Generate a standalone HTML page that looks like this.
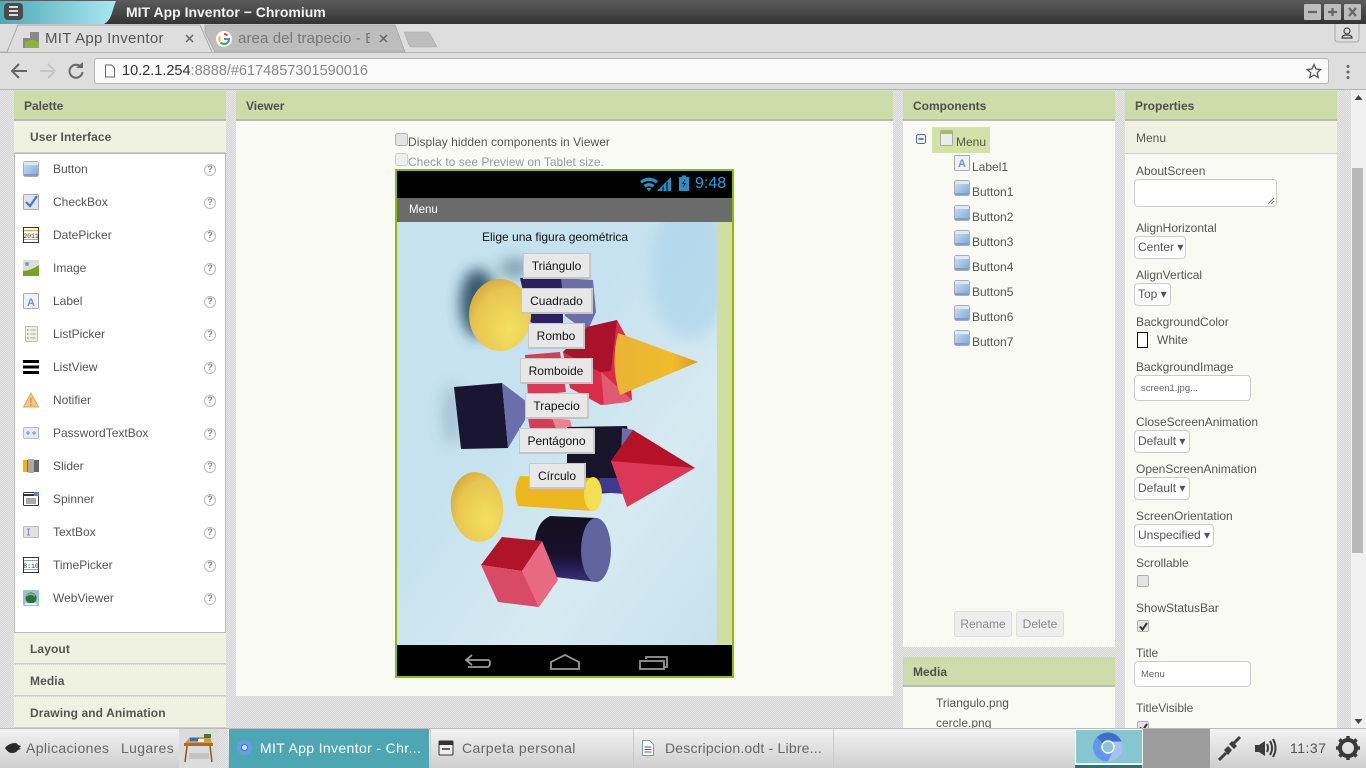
<!DOCTYPE html>
<html><head><meta charset="utf-8"><title>MIT App Inventor</title>
<style>
html,body{margin:0;padding:0;width:1366px;height:768px;overflow:hidden;background:#e4e4e4;font-family:"Liberation Sans",sans-serif;color:#555}
div,span,svg{position:absolute;box-sizing:border-box}
.t{white-space:nowrap;line-height:16px;font-size:12px;color:#555}
.dots{background-color:#e6e6e6;background-image:conic-gradient(#d6d6d6 25%,transparent 0 50%,#d6d6d6 0 75%,transparent 0);background-size:2px 2px}
.hd{background:#cddca9;border-bottom:2px solid #b9bdae;height:30px;top:91px}
.hd b{position:absolute;left:10px;top:7px;font-size:12px;line-height:16px;color:#4f4f4f}
.sub{background:#eff2e0;left:14px;width:212px;border-bottom:1px solid #ccc}
.sub b{position:absolute;left:16px;top:8px;font-size:12px;line-height:16px;color:#555;letter-spacing:.1px}
.body{background:#f9faf4}
.ic{left:23px;width:16px;height:16px}
.q{left:204px;width:12px;height:12px;border:1.5px solid #bbb;border-radius:50%;font:bold 9px/9px "Liberation Sans",sans-serif;color:#888;text-align:center;background:#fff}
.sel{left:1134px;height:23px;background:#fff;border:1px solid #ccc;border-radius:4px;font-size:12px;line-height:21px;padding-left:3px;color:#555;white-space:nowrap}
.inp{left:1134px;background:#fff;border:1px solid #ccc;border-radius:4px}
.cb{left:1137px;width:12px;height:12px;background:#e4e4e4;border:1px solid #b0b0b0;border-radius:2px}
.pb{background:#e8e8e8;border:1px solid #c8c8c8;border-bottom:2px solid #c4c4c4;border-right:2px solid #c8c8c8;font-size:12px;line-height:25px;color:#111;text-align:center;white-space:nowrap}
.btn{top:611px;height:26px;background:#eee;border:1px solid #ddd;border-radius:3px;font-size:12px;line-height:24px;text-align:center;color:#888}
.task{top:728px;height:40px;font-size:14px;line-height:40px;white-space:nowrap;color:#666}
</style></head><body>
<svg width="0" height="0" style="position:absolute"><defs>
<linearGradient id="bg" x1="0" y1="0" x2="1" y2="1"><stop offset="0" stop-color="#cfe4f1"/><stop offset="1" stop-color="#7ea4d8"/></linearGradient>
<symbol id="bt" viewBox="0 0 16 16"><rect x=".5" y=".5" width="15" height="15" rx="2" fill="url(#bg)" stroke="#aab"/><rect x="1" y="1" width="14" height="3" fill="#dfe8f5"/><rect x="1" y="13" width="14" height="2" fill="#7f9ccc"/></symbol>
</defs></svg>

<!-- title bar -->
<div style="left:0;top:0;width:1366px;height:24px;background:linear-gradient(#5c5c5c,#343434)"></div>
<svg style="left:0;top:0" width="120" height="24"><defs><linearGradient id="tg" x1="0" x2="1"><stop offset="0" stop-color="#4fa9b8"/><stop offset="1" stop-color="#a9e8f0"/></linearGradient></defs><path d="M0 1H116C112 10 112 20 104 24H0Z" fill="url(#tg)"/><rect x="4" y="3" width="19" height="17" rx="4" fill="#4b4b4b"/><path d="M9 7h9M9 11h9M9 15h9" stroke="#ddd" stroke-width="2"/></svg>
<div class="t" style="left:126px;top:4px;color:#f2f2f2;font-size:14px;font-weight:bold">MIT App Inventor − Chromium</div>
<svg style="left:1303px;top:3px" width="60" height="18"><rect x="1" y="1" width="17" height="16" rx="1" fill="#bdbdbd"/><rect x="21" y="1" width="17" height="16" rx="1" fill="#bdbdbd"/><rect x="41" y="1" width="17" height="16" rx="1" fill="#bdbdbd"/><path d="M5 9h9M25 9h9M29.500 5v8M46 5l7 8M53 5l-7 8" stroke="#666" stroke-width="2.200"/></svg>

<!-- tab strip -->
<div style="left:0;top:24px;width:1366px;height:29px;background:#dedede;border-bottom:1px solid #b5b5b5"></div>
<svg style="left:0;top:24px" width="445" height="30">
<path d="M205 1H395L405 28H215L205 8Z" fill="#bdbdbd" stroke="#aaa"/>
<path d="M0 28H7L18 1H200L212 28" fill="#dedede" stroke="#aaa"/>
<path d="M404 8H426Q429 8 430 10L437 23H412Q410 23 409 21Z" fill="#bdbdbd" stroke="#aaa" stroke-width=".6"/>
<rect x="23" y="8" width="16" height="16" fill="#888"/><rect x="23" y="8" width="7" height="6" fill="#dedede"/><path d="M25 24v-5a8 6 0 0 1 14 0v5z" fill="#8fb339"/>
<path d="M186 11l7 7M193 11l-7 7M380 11l7 7M387 11l-7 7" stroke="#666" stroke-width="1.500"/>
<circle cx="224" cy="15" r="8" fill="#fff"/>
<path d="M224 10a5 5 0 0 1 3.500 1.500" stroke="#ea4335" stroke-width="2" fill="none"/><path d="M220 12.500a5 5 0 0 0 0 5" stroke="#fbbc05" stroke-width="2" fill="none"/><path d="M220.500 18.500a5 5 0 0 0 7 0" stroke="#34a853" stroke-width="2" fill="none"/><path d="M224 15h5a5 5 0 0 1-1.500 3.500" stroke="#4285f4" stroke-width="2" fill="none"/>
</svg>
<div class="t" style="left:45px;top:31px;font-size:15px;letter-spacing:.3px;color:#555">MIT App Inventor</div>
<div class="t" style="left:238px;top:31px;width:132px;overflow:hidden;font-size:15px;letter-spacing:.1px;color:#777">area del trapecio - E</div>
<svg style="left:1334px;top:24px" width="26" height="20"><path d="M1 0V15Q1 18 4 18H22Q25 18 25 15V0" fill="#dedede" stroke="#aaa"/><circle cx="13" cy="7" r="3" fill="none" stroke="#444" stroke-width="1.200"/><path d="M8 14q0-3 5-3t5 3z" fill="none" stroke="#444" stroke-width="1.200"/></svg>

<!-- toolbar -->
<div style="left:0;top:53px;width:1366px;height:37px;background:#dedede;border-bottom:1px solid #b3b3b3"></div>
<svg style="left:10px;top:60px" width="76" height="22"><path d="M3 11h14M9 4l-7 7 7 7" fill="none" stroke="#666" stroke-width="2"/><path d="M30 11h14M38 4l7 7-7 7" fill="none" stroke="#c6c6c6" stroke-width="2"/><path d="M71 7a6.500 6.500 0 1 0 1.500 5" fill="none" stroke="#666" stroke-width="2"/><path d="M66 8h7V2z" fill="#666"/></svg>
<div style="left:94px;top:58px;width:1235px;height:26px;background:#fbfbfb;border:1px solid #b5b5b5;border-radius:3px"></div>
<svg style="left:104px;top:64px" width="12" height="14"><path d="M1.500 1h6l3 3v9h-9z" fill="#fff" stroke="#666"/></svg>
<div class="t" style="left:122px;top:63px;font-size:14.500px;color:#333">10.2.1.254<span style="position:static;color:#888">:8888/#6174857301590016</span></div>
<svg style="left:1306px;top:63px" width="16" height="16"><path d="M8 1.500l2 4.500 4.800.5-3.600 3.200 1 4.800L8 12l-4.200 2.500 1-4.800L1.200 6.500 6 6z" fill="none" stroke="#555" stroke-width="1.300"/></svg>
<svg style="left:1345px;top:64px" width="6" height="16"><circle cx="3" cy="2.500" r="1.500" fill="#666"/><circle cx="3" cy="8" r="1.500" fill="#666"/><circle cx="3" cy="13.500" r="1.500" fill="#666"/></svg>

<!-- page background -->
<div class="dots" style="left:0;top:90px;width:1351px;height:638px"></div>
<div style="left:1351px;top:90px;width:15px;height:638px;background:#f1f1f1"></div>
<div style="left:1352px;top:168px;width:11px;height:385px;background:#b8b8b8"></div>
<svg style="left:1351px;top:92px" width="15" height="10"><path d="M3.500 8L7.500 3l4 5z" fill="#444"/></svg>
<svg style="left:1351px;top:717px" width="15" height="9"><path d="M3.500 2l4 5 4-5z" fill="#444"/></svg>

<!-- Palette -->
<div class="hd" style="left:14px;width:212px"><b>Palette</b></div>
<div class="sub" style="top:121px;height:32px"><b>User Interface</b></div>
<div style="left:14px;top:153px;width:212px;height:480px;background:#fff;border:1px solid #bbb"></div>
<svg class="ic" style="top:161px"><use href="#bt" width="16" height="16"/></svg>
<svg class="ic" style="top:194px" viewBox="0 0 16 16"><rect x=".5" y=".5" width="15" height="15" rx="1" fill="#dfe3ea" stroke="#aaa"/><path d="M3 8l4 4 7-10" fill="none" stroke="#4a79bd" stroke-width="2.200"/></svg>
<svg class="ic" style="top:227px" viewBox="0 0 16 16"><rect x=".5" y=".5" width="15" height="15" fill="#fff" stroke="#333"/><path d="M1 3.500h14M1 12.500h14" stroke="#f0a040"/><text x="8" y="11" font-size="6.500" font-family="Liberation Mono" text-anchor="middle" fill="#333">2011</text></svg>
<svg class="ic" style="top:260px" viewBox="0 0 16 16"><rect width="16" height="16" fill="#d9dfe0"/><circle cx="4" cy="4" r="2" fill="#999"/><path d="M0 11q7 0 16-6v11H0z" fill="#7ea020"/></svg>
<svg class="ic" style="top:293px" viewBox="0 0 16 16"><rect x=".5" y=".5" width="15" height="15" rx="1" fill="#eef1f6" stroke="#aaa"/><text x="8" y="13" font-size="11" font-weight="bold" text-anchor="middle" fill="#6f94d0">A</text></svg>
<svg class="ic" style="top:326px" viewBox="0 0 16 16"><rect x="2.500" y=".5" width="12" height="15" rx="1" fill="#f2f2e8" stroke="#bbb"/><path d="M4 4h1.500M4 8h1.500M4 12h1.500" stroke="#8aa820" stroke-width="1.500"/><path d="M7 4h6M7 8h6M7 12h6" stroke="#aaa"/></svg>
<svg class="ic" style="top:359px" viewBox="0 0 16 16"><path d="M0 2.500h16M0 8h16M0 13.500h16" stroke="#000" stroke-width="3"/></svg>
<svg class="ic" style="top:392px" viewBox="0 0 16 16"><path d="M8 1l7.500 14H.5z" fill="#f3c77a" stroke="#d8a860"/><path d="M8 6v5M8 12v2" stroke="#c96" stroke-width="1.500"/></svg>
<svg class="ic" style="top:425px" viewBox="0 0 16 16"><rect x=".5" y="2.500" width="15" height="11" rx="1" fill="#e6e9ef" stroke="#bbb"/><path d="M3 8h4M5 6v4M9 8h4M11 6v4" stroke="#6f94d0"/></svg>
<svg class="ic" style="top:458px" viewBox="0 0 16 16"><rect y="2" width="16" height="12" fill="#666"/><rect y="2" width="4" height="12" fill="#f4b400"/><rect x="5" y="1" width="6" height="14" rx="1" fill="#aaa"/></svg>
<svg class="ic" style="top:491px" viewBox="0 0 16 16"><rect x=".5" y="1.500" width="15" height="13" rx="1" fill="#fff" stroke="#333"/><path d="M1 4h10" stroke="#333" stroke-width="2"/><rect x="11" y="1" width="5" height="4" fill="#5a85c8"/><path d="M3 8h10M3 10h10M3 12h10" stroke="#555"/></svg>
<svg class="ic" style="top:524px" viewBox="0 0 16 16"><rect x=".5" y="2.500" width="15" height="11" rx="1" fill="#e2e2e2" stroke="#bbb"/><path d="M4 5h3M4 11h3M5.500 5v6" stroke="#6f94d0"/></svg>
<svg class="ic" style="top:557px" viewBox="0 0 16 16"><rect x=".5" y=".5" width="15" height="15" fill="#fff" stroke="#333"/><path d="M1 3.500h14M1 12.500h14" stroke="#8ab"/><text x="8" y="11" font-size="6.500" font-family="Liberation Mono" text-anchor="middle" fill="#333">8:10</text></svg>
<svg class="ic" style="top:590px" viewBox="0 0 16 16"><rect width="16" height="16" rx="1" fill="#9cc0e8"/><circle cx="8" cy="8" r="5.500" fill="#2f6f3f"/><path d="M3 6q5-4 9 0" stroke="#7cc050" stroke-width="2" fill="none"/><rect x="2" y="13" width="12" height="2" fill="#e8eef5"/></svg>

<div class="t" style="left:53px;top:161px">Button</div>
<div class="t" style="left:53px;top:194px">CheckBox</div>
<div class="t" style="left:53px;top:227px">DatePicker</div>
<div class="t" style="left:53px;top:260px">Image</div>
<div class="t" style="left:53px;top:293px">Label</div>
<div class="t" style="left:53px;top:326px">ListPicker</div>
<div class="t" style="left:53px;top:359px">ListView</div>
<div class="t" style="left:53px;top:392px">Notifier</div>
<div class="t" style="left:53px;top:425px">PasswordTextBox</div>
<div class="t" style="left:53px;top:458px">Slider</div>
<div class="t" style="left:53px;top:491px">Spinner</div>
<div class="t" style="left:53px;top:524px">TextBox</div>
<div class="t" style="left:53px;top:557px">TimePicker</div>
<div class="t" style="left:53px;top:590px">WebViewer</div>
<div class="q" style="top:164px">?</div><div class="q" style="top:197px">?</div><div class="q" style="top:230px">?</div><div class="q" style="top:263px">?</div><div class="q" style="top:296px">?</div><div class="q" style="top:329px">?</div><div class="q" style="top:362px">?</div><div class="q" style="top:395px">?</div><div class="q" style="top:428px">?</div><div class="q" style="top:461px">?</div><div class="q" style="top:494px">?</div><div class="q" style="top:527px">?</div><div class="q" style="top:560px">?</div><div class="q" style="top:593px">?</div>
<div class="sub" style="top:633px;height:31px"><b>Layout</b></div>
<div class="sub" style="top:665px;height:31px"><b>Media</b></div>
<div class="sub" style="top:697px;height:31px"><b>Drawing and Animation</b></div>

<!-- Viewer -->
<div class="hd" style="left:236px;width:657px"><b>Viewer</b></div>
<div class="body" style="left:236px;top:121px;width:657px;height:576px;border-bottom:1px solid #ddd"></div>
<div class="cb" style="left:395px;top:133px;width:13px;height:13px;border-radius:3px"></div>
<div class="t" style="left:408px;top:134px;letter-spacing:.06px">Display hidden components in Viewer</div>
<div class="cb" style="left:395px;top:153px;width:13px;height:13px;border-radius:3px;background:#eee;border-color:#ccc"></div>
<div class="t" style="left:408px;top:154px;color:#999">Check to see Preview on Tablet size.</div>

<!-- Phone -->
<div style="left:395px;top:169px;width:339px;height:509px;border:2px solid #8fbc00;background:#000"></div>
<div style="left:397px;top:198px;width:335px;height:24px;background:#6b6b6b"></div>
<div class="t" style="left:409px;top:202px;color:#fff;font-size:11.5px">Menu</div>
<div style="left:717px;top:222px;width:15px;height:423px;background:#d0dea0"></div>
<svg style="left:397px;top:171px" width="335" height="27" viewBox="397 171 335 27">
<path d="M640 181q9-7 18 0l-2 2.500q-7-5-14 0zM643.500 185q5.500-4 11 0l-2 2.500q-3.500-2.500-7 0zM646.500 188.500q2.500-1.500 5 0L649 191.500z" fill="#2a8fc0"/>
<path d="M657 191l14-14v14h-3.500v-9.500l-1 1v8.500h-3v-5l-1 1v4z" fill="#2a8fc0"/>
<rect x="679" y="177" width="10" height="14" fill="#2a8fc0"/><rect x="682" y="175.500" width="4" height="2" fill="#2a8fc0"/><path d="M685 179l-3 5h2l-1 4 3-5h-2z" fill="#012"/>
</svg>
<div class="t" style="left:695px;top:176px;color:#2aa2dc;font-size:16px;line-height:16px">9:48</div>

<svg style="left:397px;top:222px" width="320" height="423" viewBox="397 222 320 423">
<defs>
<linearGradient id="sky" x1="0" y1="0" x2="1" y2="1"><stop offset="0" stop-color="#c6e2ee"/><stop offset=".4" stop-color="#c6e2f0"/><stop offset=".7" stop-color="#d6eaf1"/><stop offset="1" stop-color="#c6e2ee"/></linearGradient>
<radialGradient id="y1" cx=".65" cy=".7" r=".8"><stop offset="0" stop-color="#f4e060"/><stop offset=".7" stop-color="#e8c650"/><stop offset="1" stop-color="#cfa53e"/></radialGradient>
<linearGradient id="cone" x1="0" x2="1"><stop offset="0" stop-color="#e8b434"/><stop offset=".7" stop-color="#efbc2c"/><stop offset="1" stop-color="#d99a20"/></linearGradient>
<linearGradient id="cyl" x1="0" x2="0" y1="0" y2="1"><stop offset="0" stop-color="#141020"/><stop offset=".6" stop-color="#16102c"/><stop offset="1" stop-color="#3a2f80"/></linearGradient>
<filter id="bl" x="-100%" y="-100%" width="300%" height="300%"><feGaussianBlur stdDeviation="7"/></filter>
</defs>
<rect x="397" y="222" width="320" height="423" fill="url(#sky)"/>
<ellipse cx="690" cy="270" rx="40" ry="70" fill="#a8d2ea" opacity=".6" filter="url(#bl)"/>
<ellipse cx="478" cy="303" rx="18" ry="34" fill="#1e4054" opacity=".85" filter="url(#bl)"/>
<ellipse cx="515" cy="268" rx="16" ry="9" fill="#3a5a70" opacity=".5" filter="url(#bl)"/>
<ellipse cx="452" cy="415" rx="10" ry="30" fill="#6a8aa0" opacity=".35" filter="url(#bl)"/>
<path d="M520 278H563V335L530 322Z" fill="#2a2260"/>
<path d="M561 278L593 280 596 312 587 332 565 316Z" fill="#6a6eaa"/>
<ellipse cx="500" cy="315" rx="31" ry="36" fill="url(#y1)"/>
<path d="M525 355L560 352 566 392 528 396Z" fill="#d83a58"/>
<path d="M528 418L570 420 572 428 530 429Z" fill="#d83a58"/><path d="M552 418L570 420 572 428 556 429Z" fill="#ee8090"/>
<path d="M563 352L587 327 617 320 628 340 632 400 601 405 570 388Z" fill="#d82c48"/>
<path d="M563 352L587 327 617 320 611 371 600 372Z" fill="#a9122a"/>
<path d="M601 372L632 400 628 402 604 405Z" fill="#e05a72"/>
<path d="M618 333L698 362 620 395Q610 365 618 333Z" fill="url(#cone)"/>
<path d="M454 387L502 383 508 448 461 449Z" fill="#1a1530"/>
<path d="M502 383L527 402 525 420 508 448Z" fill="#6a6eaa"/>
<path d="M567 427L627 426 630 440 625 478 630 492 590 494 567 478Z" fill="#18142a"/>
<path d="M622 428L634 430 628 480 620 490Z" fill="#6a6eaa"/>
<path d="M600 478L630 478 627 494 595 492Z" fill="#3f3a90"/>
<path d="M633 430L695 468 627 507 611 461Z" fill="#dc3856"/>
<path d="M633 430L695 468 611 461Z" fill="#b5122a"/>
<ellipse cx="477" cy="507" rx="26" ry="35" fill="url(#y1)" transform="rotate(-8 477 507)"/>
<path d="M520 476L593 478V511L518 506Q512 490 520 476Z" fill="#ecb81e"/>
<ellipse cx="593" cy="494" rx="9" ry="17" fill="#f3e050"/>
<path d="M550 516L597 518V582L555 577Q535 560 535 540Q537 522 550 516Z" fill="url(#cyl)"/>
<ellipse cx="596" cy="550" rx="15" ry="32" fill="#5f649e"/>
<path d="M502 537L542 541 522 571 481 565Z" fill="#b01428"/>
<path d="M542 541L558 580 539 607 522 571Z" fill="#e86a80"/>
<path d="M481 565L522 571 539 607 498 602Z" fill="#d84a65"/>
</svg>
<div class="t" style="left:482px;top:229px;color:#111;font-size:12px">Elige una figura geométrica</div>
<div class="pb" style="left:523px;top:253px;width:68px;height:26px">Triángulo</div>
<div class="pb" style="left:521px;top:288px;width:72px;height:26px">Cuadrado</div>
<div class="pb" style="left:528px;top:323px;width:57px;height:26px">Rombo</div>
<div class="pb" style="left:520px;top:358px;width:73px;height:26px">Romboide</div>
<div class="pb" style="left:525px;top:393px;width:64px;height:26px">Trapecio</div>
<div class="pb" style="left:519px;top:428px;width:76px;height:26px">Pentágono</div>
<div class="pb" style="left:529px;top:463px;width:57px;height:26px">Círculo</div>
<svg style="left:397px;top:645px" width="335" height="31" viewBox="397 645 335 31"><g fill="none" stroke="#999" stroke-width="1.800"><path d="M472 655l-6 5 6 5M467 660h21q2 0 2 3t-2 4h-20"/><path d="M551 669v-7l14-7 14 7v7z"/><path d="M640 669v-8h24v8zM646 659v-2h21v10h-3"/></g></svg>

<!-- Components -->
<div class="hd" style="left:903px;width:212px"><b>Components</b></div>
<div class="body" style="left:903px;top:121px;width:212px;height:526px"></div>
<div style="left:932px;top:127px;width:58px;height:26px;background:#d5e2a5"></div>
<svg style="left:916px;top:134px" width="10" height="10"><rect x=".5" y=".5" width="9" height="9" rx="2" fill="#eef" stroke="#5566aa"/><path d="M2.500 5h5" stroke="#22339a" stroke-width="1.200"/></svg>
<svg style="left:940px;top:130px" width="13" height="16"><rect x=".5" y=".5" width="12" height="15" rx="1" fill="#ebebeb" stroke="#aaa"/><rect x="1" y="1" width="11" height="3" fill="#a9c730"/></svg>
<div class="t" style="left:956px;top:134px">Menu</div>
<svg style="left:954px;top:155px" width="16" height="16" viewBox="0 0 16 16"><rect x=".5" y=".5" width="15" height="15" rx="1" fill="#eef1f6" stroke="#aaa"/><text x="8" y="12" font-size="11" font-weight="bold" text-anchor="middle" fill="#6f94d0">A</text></svg>
<div class="t" style="left:972px;top:159px">Label1</div>
<svg style="left:954px;top:180px" width="16" height="16"><use href="#bt" width="16" height="16"/></svg><div class="t" style="left:972px;top:184px">Button1</div>
<svg style="left:954px;top:205px" width="16" height="16"><use href="#bt" width="16" height="16"/></svg><div class="t" style="left:972px;top:209px">Button2</div>
<svg style="left:954px;top:230px" width="16" height="16"><use href="#bt" width="16" height="16"/></svg><div class="t" style="left:972px;top:234px">Button3</div>
<svg style="left:954px;top:255px" width="16" height="16"><use href="#bt" width="16" height="16"/></svg><div class="t" style="left:972px;top:259px">Button4</div>
<svg style="left:954px;top:280px" width="16" height="16"><use href="#bt" width="16" height="16"/></svg><div class="t" style="left:972px;top:284px">Button5</div>
<svg style="left:954px;top:305px" width="16" height="16"><use href="#bt" width="16" height="16"/></svg><div class="t" style="left:972px;top:309px">Button6</div>
<svg style="left:954px;top:330px" width="16" height="16"><use href="#bt" width="16" height="16"/></svg><div class="t" style="left:972px;top:334px">Button7</div>
<div class="btn" style="left:954px;width:58px">Rename</div>
<div class="btn" style="left:1016px;width:48px">Delete</div>

<!-- Media -->
<div class="hd" style="left:903px;width:212px;top:657px"><b>Media</b></div>
<div class="body" style="left:903px;top:687px;width:212px;height:41px;overflow:hidden">
<div class="t" style="left:33px;top:8px">Triangulo.png</div>
<div class="t" style="left:33px;top:28px">cercle.png</div></div>

<!-- Properties -->
<div class="hd" style="left:1125px;width:212px"><b>Properties</b></div>
<div style="left:1125px;top:121px;width:212px;height:33px;background:#eff2e0;border-bottom:1px solid #ccc"></div>
<div class="t" style="left:1136px;top:130px">Menu</div>
<div class="body" style="left:1125px;top:154px;width:212px;height:574px;overflow:hidden"></div>
<div class="t" style="left:1136px;top:163px">AboutScreen</div>
<div class="inp" style="top:179px;width:143px;height:28px"></div>
<svg style="left:1267px;top:197px" width="8" height="8"><path d="M1 7l6-6M4 7l3-3" stroke="#777"/></svg>
<div class="t" style="left:1136px;top:220px">AlignHorizontal</div>
<div class="sel" style="top:236px;width:52px">Center ▾</div>
<div class="t" style="left:1136px;top:267px">AlignVertical</div>
<div class="sel" style="top:283px;width:37px">Top ▾</div>
<div class="t" style="left:1136px;top:314px">BackgroundColor</div>
<div style="left:1137px;top:332px;width:11px;height:16px;background:#fff;border:1px solid #111"></div>
<div class="t" style="left:1157px;top:332px">White</div>
<div class="t" style="left:1136px;top:359px">BackgroundImage</div>
<div class="inp" style="top:375px;width:117px;height:26px;font-size:9.500px;line-height:25px;padding-left:6px;color:#666">screen1.jpg...</div>
<div class="t" style="left:1136px;top:414px">CloseScreenAnimation</div>
<div class="sel" style="top:430px;width:56px">Default ▾</div>
<div class="t" style="left:1136px;top:461px">OpenScreenAnimation</div>
<div class="sel" style="top:477px;width:56px">Default ▾</div>
<div class="t" style="left:1136px;top:508px">ScreenOrientation</div>
<div class="sel" style="top:524px;width:80px">Unspecified ▾</div>
<div class="t" style="left:1136px;top:555px">Scrollable</div>
<div class="cb" style="top:575px"></div>
<div class="t" style="left:1136px;top:600px">ShowStatusBar</div>
<div class="cb" style="top:620px"></div>
<svg style="left:1138px;top:621px" width="11" height="11"><path d="M2 5.500l2.500 3L9 2" fill="none" stroke="#333" stroke-width="2"/></svg>
<div class="t" style="left:1136px;top:645px">Title</div>
<div class="inp" style="top:661px;width:117px;height:26px;font-size:9.500px;line-height:25px;padding-left:6px;color:#666">Menu</div>
<div class="t" style="left:1136px;top:700px">TitleVisible</div>
<div style="left:1125px;top:720px;width:30px;height:8px;overflow:hidden"><div class="cb" style="left:12px;top:1px"></div><svg style="left:13px;top:2px" width="11" height="11"><path d="M2 5.500l2.500 3L9 2" fill="none" stroke="#333" stroke-width="2"/></svg></div>

<!-- Taskbar -->
<div style="left:0;top:728px;width:1366px;height:40px;background:linear-gradient(#f2f2f2,#cfcfcf);border-top:1px solid #bbb"></div>
<svg style="left:4px;top:741px" width="18" height="14"><path d="M1 7q4-5 10-5 2 0 3 2l3 1-2 2 2 1-3 1q-2 3-6 3-4 0-7-5z" fill="#2a2a2a"/></svg>
<div class="t" style="left:26px;top:740px;font-size:14px;letter-spacing:.4px;color:#666">Aplicaciones</div>
<div class="t" style="left:121px;top:740px;font-size:14px;letter-spacing:.35px;color:#666">Lugares</div>
<div style="left:179px;top:729px;width:39px;height:39px;background:#dcdcdc"></div>
<svg style="left:182px;top:733px" width="32" height="30"><path d="M3 10L8 4H28L30 10Z" fill="#d49a48"/><path d="M2 10h29v3H2z" fill="#a86e24"/><path d="M5 13L3 29M28 13l2 16" stroke="#8a5a20" stroke-width="1.500"/><rect x="8" y="5" width="9" height="3" fill="#3a70b0"/><rect x="22" y="1" width="7" height="4" fill="#3a7a40"/><rect x="16" y="6" width="6" height="3" fill="#f4f4f4"/><rect x="7" y="20" width="20" height="6" fill="#aaa" opacity=".5"/></svg>
<div class="dots" style="left:218px;top:729px;width:10px;height:39px"></div>
<div class="task" style="left:229px;width:200px;background:#4ea6b3;color:#fff;padding-left:31px;top:729px;height:39px;line-height:38px;letter-spacing:.36px">MIT App Inventor - Chr...</div>
<svg style="left:237px;top:740px" width="15" height="15"><circle cx="7.500" cy="7.500" r="7.500" fill="#6a9be8"/><circle cx="7.500" cy="7.500" r="3" fill="#cfe2fa" stroke="#3c78d8"/></svg>
<div class="task" style="left:430px;width:202px;padding-left:31px;border-left:1px solid #ccc;top:729px;height:39px;line-height:38px;letter-spacing:.4px">Carpeta personal</div>
<svg style="left:438px;top:740px" width="16" height="16"><rect x="1" y="1" width="14" height="14" rx="1" fill="#eee" stroke="#333"/><rect x="1" y="1" width="14" height="4" fill="#333"/><path d="M4 9h8" stroke="#333" stroke-width="1.500"/></svg>
<div class="task" style="left:633px;width:201px;padding-left:31px;border-left:1px solid #ccc;border-right:1px solid #ccc;top:729px;height:39px;line-height:38px;letter-spacing:.2px">Descripcion.odt - Libre...</div>
<svg style="left:641px;top:740px" width="14" height="16"><path d="M1.500 .5h7l4 4v11h-11z" fill="#fff" stroke="#7a9ac8"/><path d="M3.500 7h7M3.500 9.500h7M3.500 12h7" stroke="#3a70b0"/></svg>
<div style="left:1075px;top:729px;width:68px;height:36px;background:#85c6d0;border:1px solid #fff;border-bottom:2px solid #fff"></div>
<div style="left:1075px;top:765px;width:67px;height:3px;background:#2a7078"></div>
<div style="left:1143px;top:729px;width:67px;height:39px;background:#9c9c9c"></div>
<svg style="left:1093px;top:732px" width="30" height="30"><circle cx="15" cy="15" r="14.500" fill="#a4c2f4"/><path d="M15 .5A14.500 14.500 0 0 1 28.500 9.500H15A6 6 0 0 0 9.500 12L4 5Q9 .5 15 .5Z" fill="#3c6fd0"/><path d="M4 5A14.500 14.500 0 0 0 15 29.500L20 19 9.500 12Z" fill="#6596ee"/><circle cx="15" cy="15" r="6" fill="#85c6d0" stroke="#fff" stroke-width="1.500"/></svg>
<svg style="left:1217px;top:735px" width="25" height="27"><path d="M2 25L9 18M16 9L23 2" stroke="#3c3c3c" stroke-width="3"/><path d="M7 15l4-4 4 4-4 5zM12 9l3-3 5 5-3 3z" fill="#3c3c3c"/></svg>
<svg style="left:1253px;top:736px" width="24" height="24"><path d="M2 9h4l6-4v15l-6-4H2z" fill="#3c3c3c"/><path d="M14 8q2 4 0 8M17 5q4 7 0 14M20 3q5 9 0 18" fill="none" stroke="#3c3c3c" stroke-width="2"/></svg>
<div class="t" style="left:1290px;top:740px;font-size:14px;letter-spacing:.5px;color:#555">11:37</div>
<svg style="left:1336px;top:736px" width="24" height="24"><circle cx="12" cy="12" r="8" fill="none" stroke="#3a3a3a" stroke-width="4"/><path d="M12 0v5M12 19v5M0 12h5M19 12h5M3.500 3.500l3.500 3.500M17 17l3.500 3.500M3.500 20.500L7 17M17 7l3.500-3.500" stroke="#3a3a3a" stroke-width="3.500"/></svg>
</body></html>
